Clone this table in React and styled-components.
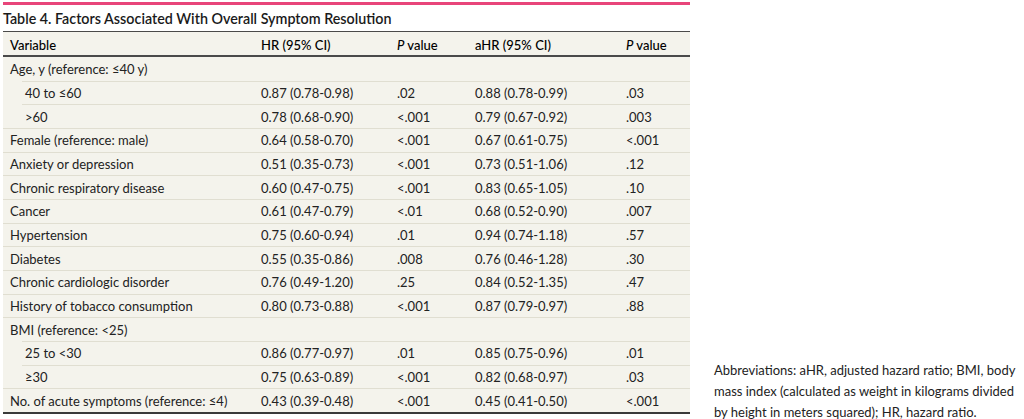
import React from 'react';
import styled, { createGlobalStyle } from 'styled-components';

const GlobalStyle = createGlobalStyle`
  html, body {
    margin: 0;
    padding: 0;
    background: #ffffff;
  }
  body {
    font-family: Lato, "Liberation Sans", sans-serif;
    color: #222222;
  }
`;

const COLUMNS = '251px 136px 78px 151px 71px';

const Page = styled.div`
  display: flex;
  align-items: flex-start;
  gap: 24px;
  padding: 2px 0 0 3px;
  width: 1021px;
  height: 417px;
  overflow: hidden;
`;

const TableWrap = styled.div`
  width: 687px;
  flex-shrink: 0;
`;

const TitleBar = styled.div`
  border-top: 3px solid #e8457a;
  height: 26px;
  display: flex;
  align-items: center;
`;

const Title = styled.h2`
  margin: 0;
  font-size: 14.3px;
  font-weight: 600;
  color: #1a1a1a;
`;

const Table = styled.div`
  background: #f4f3ec;
  border-top: 1px solid #4a4a4a;
  border-bottom: 2px solid #3a3a3a;
`;

const HeaderRow = styled.div`
  display: grid;
  grid-template-columns: ${COLUMNS};
  height: 25px;
  padding-top: 3px;
  box-sizing: border-box;
  align-items: center;
  border-bottom: 2px solid #4a4a4a;
  font-size: 13px;
  font-weight: 500;
  color: #000000;
`;

const Row = styled.div`
  display: grid;
  grid-template-columns: ${COLUMNS};
  height: 23.67px;
  font-size: 13px;
`;

const Cell = styled.div`
  display: flex;
  align-items: center;
  padding-left: ${(p) => (p.$indent ? '3px' : '7px')};
  margin-left: ${(p) => (p.$indent ? '19px' : '0')};
  border-top: 1px solid ${(p) => (p.$first ? 'transparent' : '#e0ded1')};
  white-space: nowrap;
`;

const HeadCell = styled.div`
  padding-left: 7px;
  white-space: nowrap;
`;

const Note = styled.p`
  align-self: flex-end;
  margin: 0 0 -3.5px;
  font-size: 13px;
  line-height: 21px;
  color: #222222;
  white-space: nowrap;
`;

const rows = [
  { label: 'Age, y (reference: ≤40 y)', values: ['', '', '', ''] },
  { label: '40 to ≤60', sub: true, values: ['0.87 (0.78-0.98)', '.02', '0.88 (0.78-0.99)', '.03'] },
  { label: '>60', sub: true, values: ['0.78 (0.68-0.90)', '<.001', '0.79 (0.67-0.92)', '.003'] },
  { label: 'Female (reference: male)', values: ['0.64 (0.58-0.70)', '<.001', '0.67 (0.61-0.75)', '<.001'] },
  { label: 'Anxiety or depression', values: ['0.51 (0.35-0.73)', '<.001', '0.73 (0.51-1.06)', '.12'] },
  { label: 'Chronic respiratory disease', values: ['0.60 (0.47-0.75)', '<.001', '0.83 (0.65-1.05)', '.10'] },
  { label: 'Cancer', values: ['0.61 (0.47-0.79)', '<.01', '0.68 (0.52-0.90)', '.007'] },
  { label: 'Hypertension', values: ['0.75 (0.60-0.94)', '.01', '0.94 (0.74-1.18)', '.57'] },
  { label: 'Diabetes', values: ['0.55 (0.35-0.86)', '.008', '0.76 (0.46-1.28)', '.30'] },
  { label: 'Chronic cardiologic disorder', values: ['0.76 (0.49-1.20)', '.25', '0.84 (0.52-1.35)', '.47'] },
  { label: 'History of tobacco consumption', values: ['0.80 (0.73-0.88)', '<.001', '0.87 (0.79-0.97)', '.88'] },
  { label: 'BMI (reference: <25)', values: ['', '', '', ''] },
  { label: '25 to <30', sub: true, values: ['0.86 (0.77-0.97)', '.01', '0.85 (0.75-0.96)', '.01'] },
  { label: '≥30', sub: true, values: ['0.75 (0.63-0.89)', '<.001', '0.82 (0.68-0.97)', '.03'] },
  { label: 'No. of acute symptoms (reference: ≤4)', values: ['0.43 (0.39-0.48)', '<.001', '0.45 (0.41-0.50)', '<.001'] },
];

const App = () => {
  return (
    <>
      <GlobalStyle />
      <Page>
        <TableWrap>
          <TitleBar>
            <Title>Table 4. Factors Associated With Overall Symptom Resolution</Title>
          </TitleBar>
          <Table>
            <HeaderRow>
              <HeadCell>Variable</HeadCell>
              <HeadCell>HR (95% CI)</HeadCell>
              <HeadCell><i>P</i> value</HeadCell>
              <HeadCell>aHR (95% CI)</HeadCell>
              <HeadCell><i>P</i> value</HeadCell>
            </HeaderRow>
            {rows.map((row, i) => (
              <Row key={row.label}>
                <Cell $indent={row.sub} $first={i === 0}>{row.label}</Cell>
                {row.values.map((v, j) => (
                  <Cell key={j} $first={i === 0}>{v}</Cell>
                ))}
              </Row>
            ))}
          </Table>
        </TableWrap>
        <Note>
          Abbreviations: aHR, adjusted hazard ratio; BMI, body
          <br />
          mass index (calculated as weight in kilograms divided
          <br />
          by height in meters squared); HR, hazard ratio.
        </Note>
      </Page>
    </>
  );
};

export default App;
